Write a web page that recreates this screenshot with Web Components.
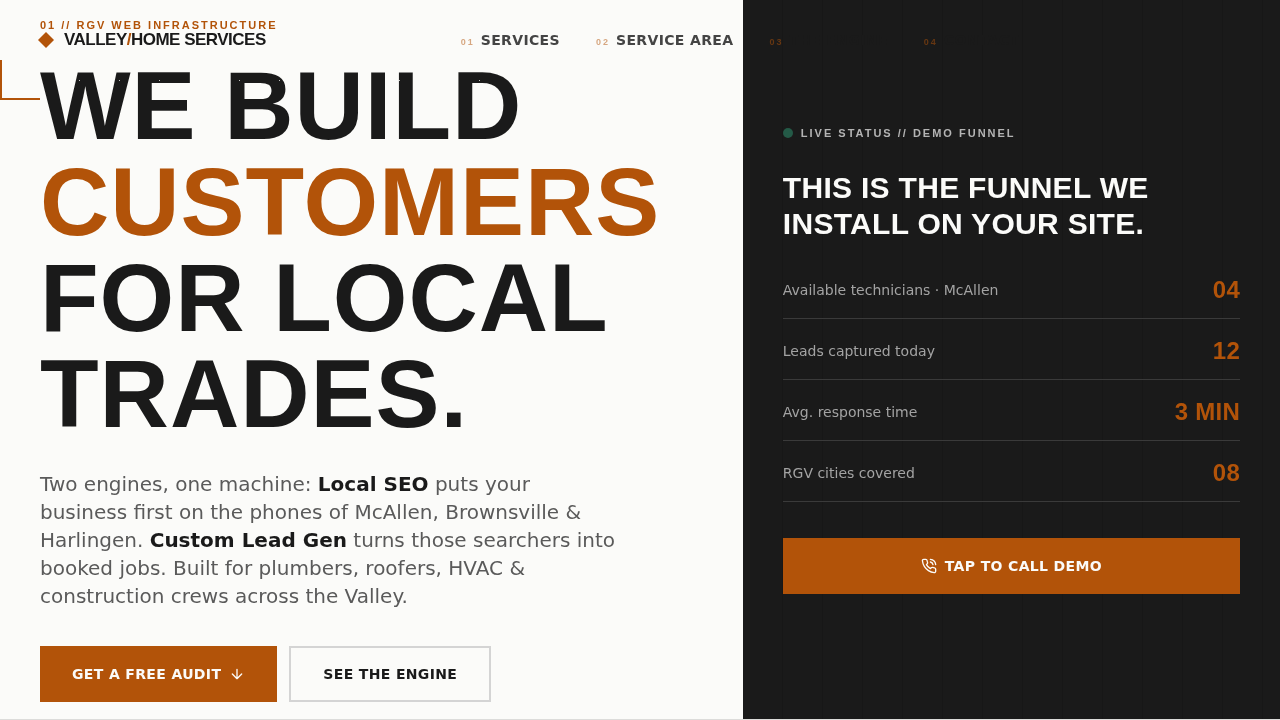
<!DOCTYPE html>
<html lang="en">
<head>
<meta charset="utf-8">
<meta name="viewport" content="width=device-width, initial-scale=1">
<title>Valley/Home Services</title>
<style>
:root{--accent:#b25309;--ink:#1a1a1a;--paper:#fbfbf9;--head:"Liberation Sans",Arial,sans-serif;--body:"DejaVu Sans",Verdana,sans-serif}
body{margin:0;background:var(--paper);color:var(--ink);font-family:var(--body)}
</style>
</head>
<body>
<valley-page></valley-page>
<script>
const define = (name, html) => {
  const tpl = document.createElement('template');
  tpl.innerHTML = html;
  customElements.define(name, class extends HTMLElement {
    constructor() {
      super();
      this.attachShadow({mode: 'open'}).append(tpl.content.cloneNode(true));
    }
  });
};

define('nav-item', `<style>
:host{display:block}
a{display:flex;align-items:baseline;gap:6px;color:inherit;text-decoration:none;font:bold 14px/20px var(--body);letter-spacing:.025em;white-space:nowrap}
.n{font:bold 9px/20px var(--head);letter-spacing:2px;color:var(--accent);opacity:.5}
</style><a href="#"><span class="n"><slot name="n"></slot></span><span><slot></slot></span></a>`);

define('site-header', `<style>
:host{display:block;position:absolute;top:0;left:0;right:0}
header{display:flex;align-items:center;height:80px;padding:0 40px;gap:195px}
.logo{display:flex;align-items:center;gap:9px;color:var(--ink);text-decoration:none;font:bold 17px/24px var(--head);letter-spacing:-.03em;white-space:nowrap}
.logo svg{width:18px;height:18px;margin-left:-3px}
b{color:var(--accent)}
nav{display:flex;gap:36px;padding-top:2px;color:#444}
.dark{color:var(--ink)}
</style><header>
<a class="logo" href="#"><svg viewBox="0 0 18 18"><path d="M9 1l8 8-8 8-8-8z" fill="#b25309"/></svg><span>VALLEY<b>/</b>HOME SERVICES</span></a>
<nav><nav-item><span slot="n">01</span>SERVICES</nav-item><nav-item><span slot="n">02</span>SERVICE AREA</nav-item><nav-item class="dark"><span slot="n">03</span>THE ENGINE</nav-item><nav-item class="dark"><span slot="n">04</span>CONTACT</nav-item></nav>
</header>`);

define('action-button', `<style>
:host{display:block}
button{display:flex;align-items:center;justify-content:center;gap:8px;width:100%;height:56px;padding:0 32px;border:0;border-radius:0;background:var(--accent);color:var(--paper);font:bold 14px/20px var(--body);letter-spacing:.025em;white-space:nowrap;cursor:pointer}
:host([outline]) button{background:transparent;color:var(--ink);border:2px solid #d4d4d4}
</style><button type="button"><slot></slot></button>`);

define('hero-copy', `<style>
:host{display:block}
section{position:relative;padding:18px 40px 17px}
.corner{position:absolute;left:0;top:60px;width:38px;height:38px;border:solid var(--accent);border-width:0 0 2px 2px}
.ticks{position:absolute;left:0;right:0;top:80px;height:1px;background:repeating-linear-gradient(90deg,transparent 0 39px,#c4c4c2 39px 40px);mix-blend-mode:lighten}
.eyebrow{margin:0;font:bold 11px/14px var(--head);letter-spacing:2px;color:var(--accent)}
h1{margin:26px 0 0;font:bold 96px/96px var(--head);letter-spacing:.01em}
em{font-style:normal;color:var(--accent)}
.lead{margin:28px 0 36px;max-width:580px;font-size:20px;line-height:28px;color:#5a5a5a}
strong{color:var(--ink)}
.row{display:flex;gap:12px}
svg{width:16px;height:16px}
</style><section><span class="corner"></span>
<p class="eyebrow">01 // RGV WEB INFRASTRUCTURE</p>
<h1>WE BUILD <br><em>CUSTOMERS</em><br>FOR LOCAL<br>TRADES.</h1>
<p class="lead">Two engines, one machine: <strong>Local SEO</strong> puts your business first on the phones of McAllen, Brownsville &amp; Harlingen. <strong>Custom Lead Gen</strong> turns those searchers into booked jobs. Built for plumbers, roofers, HVAC &amp; construction crews across the Valley.</p>
<div class="row"><action-button>GET A FREE AUDIT <svg viewBox="0 0 24 24" fill="none" stroke="currentColor" stroke-width="2" stroke-linecap="round" stroke-linejoin="round"><path d="M12 5v14M19 12l-7 7-7-7"/></svg></action-button><action-button outline>SEE THE ENGINE</action-button></div>
<span class="ticks"></span></section>`);

define('stat-row', `<style>
:host{display:flex;align-items:center;justify-content:space-between;padding:18px 0 14px;border-bottom:1px solid #3a3a3a}
.l{font-size:14px;line-height:20px;color:#a3a3a3}
.v{font:bold 24px/28px var(--head);letter-spacing:.01em;color:var(--accent)}
</style><span class="l"><slot></slot></span><span class="v"><slot name="v"></slot></span>`);

define('live-panel', `<style>
:host{display:flex;flex-direction:column;justify-content:center;padding:0 40px;background:repeating-linear-gradient(90deg,transparent 0 39px,#171717 39px 40px),#1a1a1a}
.status{display:flex;align-items:center;gap:8px;margin:0;font:bold 11px/16px var(--head);letter-spacing:2px;color:#b4b4b4}
.dot{width:10px;height:10px;border-radius:50%;background:#245a47}
h2{margin:29px 0 16px;font:bold 30px/36px var(--head);letter-spacing:.01em;color:var(--paper)}
action-button{margin-top:36px}
svg{width:16px;height:16px}
</style>
<p class="status"><span class="dot"></span>LIVE STATUS // DEMO FUNNEL</p>
<h2>THIS IS THE FUNNEL WE INSTALL ON YOUR SITE.</h2>
<stat-row>Available technicians · McAllen<span slot="v">04</span></stat-row>
<stat-row>Leads captured today<span slot="v">12</span></stat-row>
<stat-row>Avg. response time<span slot="v">3 MIN</span></stat-row>
<stat-row>RGV cities covered<span slot="v">08</span></stat-row>
<action-button><svg viewBox="0 0 24 24" fill="none" stroke="currentColor" stroke-width="2" stroke-linecap="round" stroke-linejoin="round"><path d="M22 16.920v3a2 2 0 0 1-2.180 2 19.790 19.790 0 0 1-8.630-3.070 19.500 19.500 0 0 1-6-6 19.790 19.790 0 0 1-3.070-8.670A2 2 0 0 1 4.110 2h3a2 2 0 0 1 2 1.720c.127.960.361 1.903.7 2.810a2 2 0 0 1-.45 2.110L8.090 9.910a16 16 0 0 0 6 6l1.270-1.270a2 2 0 0 1 2.110-.45c.907.339 1.850.573 2.810.7A2 2 0 0 1 22 16.920z"/><path d="M14.050 2a9 9 0 0 1 8 7.940M14.050 6A5 5 0 0 1 18 10"/></svg>TAP TO CALL DEMO</action-button>`);

define('valley-page', `<style>
:host{display:block;position:relative}
main{display:grid;grid-template-columns:58fr 42fr;column-gap:1px;border-bottom:1px solid #dcdcda}
</style><main><hero-copy></hero-copy><live-panel></live-panel></main><site-header></site-header>`);
</script>
</body>
</html>
